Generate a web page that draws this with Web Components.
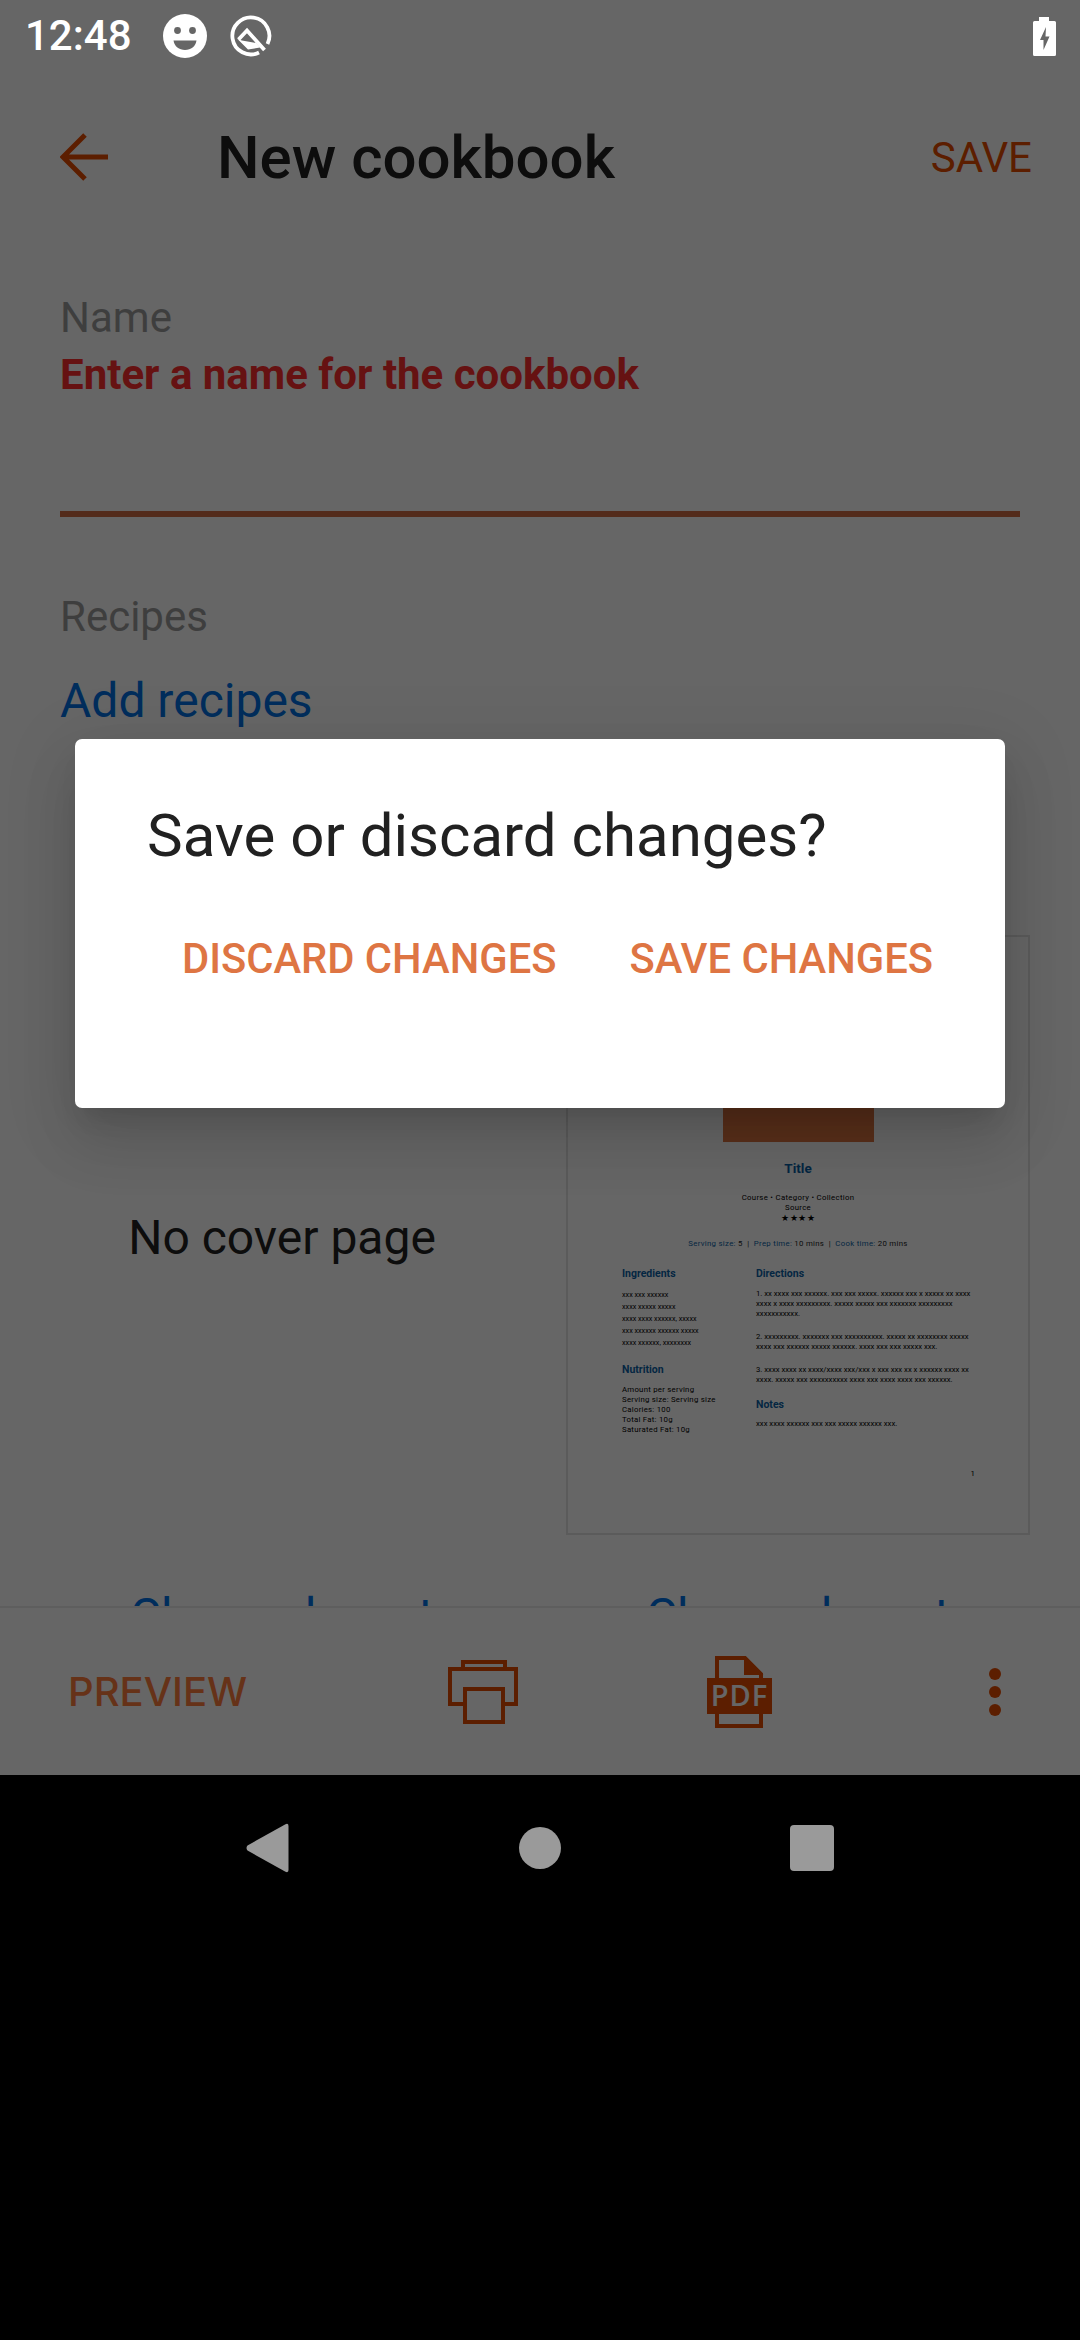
<!doctype html>
<html>
<head>
<meta charset="utf-8">
<style>
html,body{margin:0;padding:0;background:#000}
body{width:1080px;height:2340px;overflow:hidden;font-family:Roboto,"Liberation Sans",sans-serif}
</style>
</head>
<body>
<cookbook-screen></cookbook-screen>
<script>
customElements.define('status-bar', class extends HTMLElement {
    constructor() {
        super();
        this.attachShadow({ mode: 'open' }).innerHTML = `
        <style>
        :host {
            display:flex;align-items:center;
            height:72px;padding:0 24px 0 25px;
            background:#666;color:#fff;
            font:500 42px/72px Roboto,sans-serif;
        }
        svg {display:block}
        .smile {margin-left:31px}
        .q {margin-left:22px}
        .batt {margin-left:auto}
        </style>
        <span>12:48</span>
        <svg class=smile width=44 height=44 viewBox="0 0 44 44">
            <circle cx=22 cy=22 r=22 fill=#fff />
            <circle cx=14.500 cy=16.500 r=3.400 fill=#666 />
            <circle cx=29.500 cy=16.500 r=3.400 fill=#666 />
            <path d="M10.500 26.500H33.500C32.500 32.500 28 36 22 36S11.500 32.500 10.500 26.500Z" fill=#666 />
        </svg>
        <svg class=q width=44 height=44 viewBox="0 0 44 44" fill=none stroke=#fff>
            <path d="M30 38.500A18.500 18.500 0 1 1 38.500 30" stroke-width=3.800 />
            <path d="M9.500 25.500L18 16.500L35.500 36" stroke-width=3.800 />
            <path d="M8.500 25L13 26.500L27 29L31 33.500L19 35.500Z" fill=#fff stroke=none />
        </svg>
        <svg class=batt width=23 height=39 viewBox="0 0 23 39">
            <path d="M6 0H16V4H21.500Q23 4 23 5.500V37.500Q23 39 21.500 39H1.500Q0 39 0 37.500V5.500Q0 4 1.500 4H6Z" fill=#fff />
            <path d="M13 10L7 23H10.500V33L16.500 19.500H12.500Z" fill=#666 />
        </svg>`;
    }
});

customElements.define('app-toolbar', class extends HTMLElement {
    constructor() {
        super();
        this.attachShadow({ mode: 'open' }).innerHTML = `
        <style>
        :host {
            display:flex;align-items:center;
            height:170px;padding:0 48px 0 60px;
        }
        svg {display:block;flex:none}
        h1 {
            margin:2px 0 0 109px;flex:1;
            font:500 60px/70px Roboto,sans-serif;color:#212121;
        }
        span {font:400 42px/60px Roboto,sans-serif;color:var(--strong);margin-top:2px}
        </style>
        <svg width=48 height=48 viewBox="0 0 48 48" fill=none stroke=var(--strong) stroke-width=5>
            <path d="M48 24H4M25 2L3 24L25 46" />
        </svg>
        <h1><slot></slot></h1>
        <span>SAVE</span>`;
    }
});

customElements.define('name-field', class extends HTMLElement {
    constructor() {
        super();
        this.attachShadow({ mode: 'open' }).innerHTML = `
        <style>
        :host {display:block;padding:51px 60px 0}
        .label {font:400 42px/50px Roboto,sans-serif;color:#9c9c9c}
        .err {font:700 42px/50px Roboto,sans-serif;color:#ff2f2f;margin-top:7px}
        .line {height:6px;background:#cf6d44;margin-top:111px}
        </style>
        <div class=label>Name</div>
        <div class=err>Enter a name for the cookbook</div>
        <div class=line></div>`;
    }
});

customElements.define('recipes-field', class extends HTMLElement {
    constructor() {
        super();
        this.attachShadow({ mode: 'open' }).innerHTML = `
        <style>
        :host {display:block;padding:75px 60px 0}
        .label {font:400 42px/50px Roboto,sans-serif;color:#9c9c9c}
        .link {font:400 48px/60px Roboto,sans-serif;color:var(--link);margin-top:29px}
        </style>
        <div class=label>Recipes</div>
        <div class=link>Add recipes</div>`;
    }
});

// thumbnail of the printed page, all of it tiny real text
customElements.define('recipe-page', class extends HTMLElement {
    constructor() {
        super();
        this.attachShadow({ mode: 'open' }).innerHTML = `
        <style>
        :host {
            display:block;box-sizing:border-box;
            width:464px;height:600px;
            background:#fff;border:2px solid #e4e4e4;
            padding-top:105px;
            font:400 7.800px/10px Roboto,sans-serif;color:#000;
            text-align:center;
        }
        .banner {width:151px;height:100px;background:var(--accent);margin:0 auto}
        .title {font:700 13.500px/18px Roboto,sans-serif;color:#0b5fa5;margin-top:17px}
        .meta {margin-top:16px;letter-spacing:.3px}
        .stars {font-size:8.500px;line-height:11px;letter-spacing:.5px}
        .times {margin-top:15px;letter-spacing:.3px;color:#222}
        .times b {font-weight:400;color:#0b5fa5}
        .cols {display:grid;grid-template-columns:134px 1fr;margin:18px 0 0 54px;text-align:left;white-space:nowrap}
        h4 {margin:0;font:700 10.500px/14px Roboto,sans-serif;color:#0b5fa5}
        .ing {margin-top:8px;line-height:12px;font-size:7.200px}
        .nut {margin-top:8px;letter-spacing:.25px}
        .nut-h {margin-top:14px}
        .dir {margin-top:8px;font-size:7.700px}
        .dir p {margin:0 0 13px}
        .notes {margin-top:5px}
        .notes + .dir {margin-top:7px}
        .pg {margin:34px 0 0 0;text-align:right;padding-right:53px}
        </style>
        <div class=banner></div>
        <div class=title>Title</div>
        <div class=meta>Course &bull; Category &bull; Collection<br>Source<div class=stars>&#9733;&#9733;&#9733;&#9733;</div></div>
        <div class=times><b>Serving size:</b> 5 &nbsp;|&nbsp; <b>Prep time:</b> 10 mins &nbsp;|&nbsp; <b>Cook time:</b> 20 mins</div>
        <div class=cols>
            <div>
                <h4>Ingredients</h4>
                <div class=ing>xxx xxx xxxxxx<br>xxxx xxxxx xxxxx<br>xxxx xxxx xxxxxx, xxxxx<br>xxx xxxxxx xxxxxx xxxxx<br>xxxx xxxxxx, xxxxxxxx</div>
                <h4 class=nut-h>Nutrition</h4>
                <div class=nut>Amount per serving<br>Serving size: Serving size<br>Calories: 100<br>Total Fat: 10g<br>Saturated Fat: 10g</div>
            </div>
            <div>
                <h4>Directions</h4>
                <div class=dir>
                    <p>1. xx xxxx xxx xxxxxx. xxx xxx xxxxx. xxxxxx xxx x xxxxx xx xxxx<br>xxxx x xxxx xxxxxxxxx. xxxxx xxxxx xxx xxxxxxx xxxxxxxxx<br>xxxxxxxxxxx.</p>
                    <p>2. xxxxxxxxx. xxxxxxx xxx xxxxxxxxxx. xxxxx xx xxxxxxxx xxxxx<br>xxxx xxx xxxxxx xxxxx xxxxxx. xxxx xxx xxx xxxxx xxx.</p>
                    <p>3. xxxx xxxx xx xxxx/xxxx xxx/xxx x xxx xxx xx x xxxxxx xxxx xx<br>xxxx. xxxxx xxx xxxxxxxxxx xxxx xxx xxxx xxxx xxx xxxxxx.</p>
                </div>
                <h4 class=notes>Notes</h4>
                <div class=dir>xxx xxxx xxxxxx xxx xxx xxxxx xxxxxx xxx.</div>
            </div>
        </div>
        <div class=pg>1</div>`;
    }
});

customElements.define('cover-layouts', class extends HTMLElement {
    constructor() {
        super();
        this.attachShadow({ mode: 'open' }).innerHTML = `
        <style>
        :host {
            display:grid;grid-template-columns:516px 516px;
            padding:204px 24px 0;justify-items:center;align-items:center;
        }
        .none {font:400 48px/60px Roboto,sans-serif;color:#212121;margin-top:6px}
        .link {font:400 48px/60px Roboto,sans-serif;color:var(--link);margin-top:51px}
        </style>
        <div class=none>No cover page</div>
        <recipe-page></recipe-page>
        <div class=link>Change layout</div>
        <div class=link>Change layout</div>`;
    }
});

customElements.define('action-bar', class extends HTMLElement {
    constructor() {
        super();
        this.attachShadow({ mode: 'open' }).innerHTML = `
        <style>
        :host {
            display:grid;grid-template-columns:355px 256px 256px 1fr;
            justify-items:center;align-items:center;
            height:169px;box-sizing:border-box;
            background:#fff;border-top:2px solid #ececec;
            position:relative;
        }
        span {
            justify-self:start;margin-left:68px;
            font:500 40px/60px Inter,Roboto,sans-serif;
            color:#ff7d3e;
        }
        svg {display:block}
        .more {justify-self:start;margin-left:122px}
        text {font:600 29px "Open Sans",sans-serif;letter-spacing:1px}
        </style>
        <span>PREVIEW</span>
        <svg width=72 height=66 viewBox="0 0 72 66" fill=none stroke=var(--strong) stroke-width=4>
            <path d="M16 8V3H58V8" />
            <path d="M16 45H3V10H69V45H56" />
            <rect x=18 y=30 width=38 height=33 />
        </svg>
        <svg width=65 height=72 viewBox="0 0 65 72" fill=none stroke=var(--strong) stroke-width=4>
            <path d="M10 23V2H38L54 18V23M10 57V70H54V57" />
            <path d="M38 2V18H54Z" fill=var(--strong) stroke-width=2 />
            <rect x=0 y=22 width=65 height=36 fill=var(--strong) stroke=none />
            <text x=32.500 y=50 text-anchor=middle fill=#fff stroke=none>PDF</text>
        </svg>
        <svg class=more width=12 height=48 viewBox="0 0 12 48" fill=var(--strong)>
            <circle cx=6 cy=6 r=6 /><circle cx=6 cy=24 r=6 /><circle cx=6 cy=42 r=6 />
        </svg>`;
    }
});

customElements.define('confirm-dialog', class extends HTMLElement {
    constructor() {
        super();
        this.attachShadow({ mode: 'open' }).innerHTML = `
        <style>
        :host {
            display:block;box-sizing:border-box;
            position:absolute;left:75px;top:667px;
            width:930px;height:369px;
            padding:62px 72px 0;
            background:#fff;border-radius:7px;
            box-shadow:0 36px 57px 4px rgba(0,0,0,.09),0 14px 69px 12px rgba(0,0,0,.08),0 17px 23px -10px rgba(0,0,0,.12);
        }
        h2 {margin:0;font:400 60px/70px Roboto,sans-serif;color:#212121;white-space:nowrap}
        div {display:flex;justify-content:flex-end;gap:73px;margin-top:58px;white-space:nowrap}
        span {font:500 41.700px/60px Roboto,sans-serif;color:var(--accent)}
        </style>
        <h2><slot></slot></h2>
        <div><span>DISCARD CHANGES</span><span>SAVE CHANGES</span></div>`;
    }
});

customElements.define('nav-bar', class extends HTMLElement {
    constructor() {
        super();
        this.attachShadow({ mode: 'open' }).innerHTML = `
        <style>
        :host {
            display:flex;justify-content:center;align-items:center;gap:229px;
            height:146px;
        }
        svg {display:block}
        </style>
        <svg width=44 height=50 viewBox="0 0 44 50" fill=#9a9a9a>
            <path d="M1.500 22.500L39.500 1.200Q42.500 0 42.500 3V47Q42.500 50 39.500 48.800L1.500 27.500Q-.5 25 1.500 22.500Z" />
        </svg>
        <svg width=42 height=42 viewBox="0 0 42 42" fill=#9a9a9a><circle cx=21 cy=21 r=21 /></svg>
        <svg width=44 height=46 viewBox="0 0 44 46" fill=#9a9a9a><rect width=44 height=46 rx=4 /></svg>`;
    }
});

customElements.define('cookbook-screen', class extends HTMLElement {
    constructor() {
        super();
        this.attachShadow({ mode: 'open' }).innerHTML = `
        <style>
        :host {
            display:flex;flex-direction:column;
            width:1080px;height:2340px;background:#000;
            --strong:#e64c00;--accent:#de7543;--link:#0072e6;
        }
        .app {
            position:relative;height:1703px;flex:none;background:#fff;
            display:flex;flex-direction:column;overflow:hidden;
        }
        .scroll {flex:1;min-height:0;overflow:hidden}
        .scrim {position:absolute;inset:0;background:rgba(0,0,0,.6)}
        </style>
        <status-bar></status-bar>
        <div class=app>
            <app-toolbar>New cookbook</app-toolbar>
            <div class=scroll>
                <name-field></name-field>
                <recipes-field></recipes-field>
                <cover-layouts></cover-layouts>
            </div>
            <action-bar></action-bar>
            <div class=scrim></div>
            <confirm-dialog>Save or discard changes?</confirm-dialog>
        </div>
        <nav-bar></nav-bar>`;
    }
});
</script>
</body>
</html>
